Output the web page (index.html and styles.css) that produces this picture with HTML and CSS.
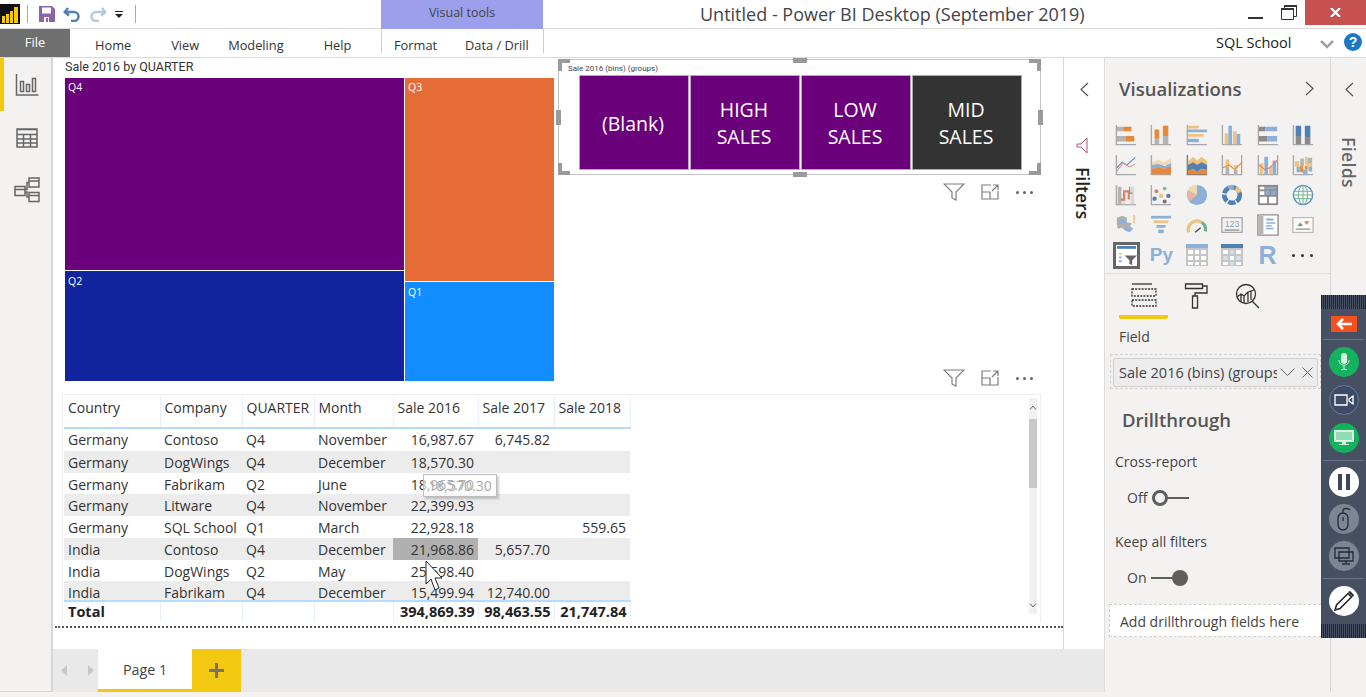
FILE: index.html
```html
<!DOCTYPE html>
<html lang="en">
<head>
    <meta charset="UTF-8">
    <title>Untitled - Power BI Desktop</title>
    <link rel="stylesheet" href="styles.css">
</head>
<body>
<div class="app">

    <!-- title bar -->
    <div class="titlebar">
        <svg class="logo" width="20" height="20" viewBox="0 0 20 20"><rect width="20" height="20" fill="#111"/><path fill="#f2c811" d="M2 12h3v7H2zM6 10h3v9H6zM10 7h3v12h-3zM14 3h4v16h-4z"/></svg>
        <span class="qat-sep"></span>
        <svg class="qat-save" width="16" height="16" viewBox="0 0 16 16"><path fill="#8a63a8" d="M0 0h13l3 3v13H0z"/><path fill="#fff" d="M3 1.500h9v6H3zM5 11h5v5H5z"/><path fill="#8a63a8" d="M7 12h2v4H7z"/></svg>
        <svg class="qat-undo" width="18" height="16" viewBox="0 0 18 16"><path fill="none" stroke="#4f81b5" stroke-width="2.500" d="M5 2L1.800 6 6 9.500M2 6h9a4.500 4.500 0 0 1 0 9H8"/></svg>
        <svg class="qat-redo" width="18" height="16" viewBox="0 0 18 16"><path fill="none" stroke="#b5c8dc" stroke-width="2.500" d="M13 2l3.200 4L12 9.500M16 6H7a4.500 4.500 0 0 0 0 9h3"/></svg>
        <svg class="qat-more" width="8" height="7" viewBox="0 0 8 7"><path fill="#222" d="M0 0h8v1H0zM0 3h8L4 7z"/></svg>
        <span class="qat-sep qat-sep-end"></span>
        <div class="visual-tools">Visual tools</div>
        <div class="app-title">Untitled - Power BI Desktop (September 2019)</div>
        <svg class="win-min" width="15" height="2"><rect width="15" height="2" fill="#333"/></svg>
        <svg class="win-max" width="16" height="15" viewBox="0 0 16 15"><path fill="none" stroke="#333" d="M.5 3.500h12v11H.5zM3.500 3V.5h12v11H13"/><path stroke="#333" stroke-width="2" d="M0 4h13M3 1h13"/></svg>
        <div class="win-close"><svg width="11" height="9" viewBox="0 0 11 9"><path stroke="#fff" stroke-width="2.200" d="M1 0l9 9M10 0L1 9"/></svg></div>
    </div>

    <!-- ribbon tabs -->
    <div class="ribbon">
        <div class="file-tab">File</div>
        <span class="tab tab-home">Home</span>
        <span class="tab tab-view">View</span>
        <span class="tab tab-modeling">Modeling</span>
        <span class="tab tab-help">Help</span>
        <div class="context-tabs">
            <span class="tab">Format</span>
            <span class="tab">Data / Drill</span>
        </div>
        <span class="account">SQL School</span>
        <svg class="account-chev" width="14" height="9" viewBox="0 0 14 9"><path fill="none" stroke="#a0a0a0" stroke-width="2.500" d="M1 1l6 6 6-6"/></svg>
        <div class="help-btn">?</div>
    </div>

    <div class="main">
        <!-- left rail -->
        <div class="rail">
            <div class="rail-item rail-active">
                <svg width="24" height="24" viewBox="0 0 24 24" class="rail-icon"><path d="M1.500 1v21h22M5.500 8.500h3v10h-3zM11.500 11.500h3v7h-3zM17.500 5.500h3v13h-3z"/></svg>
            </div>
            <div class="rail-item">
                <svg width="22" height="20" viewBox="0 0 22 20" class="rail-icon"><path d="M1 1h20v18H1zM1 1.500h20M1 6.500h20M1 11h20M1 15h20M7.500 6.500V19M14.500 6.500V19"/></svg>
            </div>
            <div class="rail-item">
                <svg width="26" height="28" viewBox="0 0 26 28" class="rail-icon"><path d="M15 1h10v9H15zM1 9.500h10v9H1zM15 15.500h10v9H15zM15 4h10M1 12.500h10M15 18.500h10M11 12.500h2V5.500h2M11 15h2v5h2"/></svg>
            </div>
        </div>

        <div class="center">
            <div class="center-top">
                <div class="canvas">
                    <div class="canvas-top">
                        <!-- treemap -->
                        <div class="treemap-visual">
                            <div class="visual-title">Sale 2016 by QUARTER</div>
                            <div class="treemap">
                                <div class="tm-col tm-col-a">
                                    <div class="tm-cell tm-q4">Q4</div>
                                    <div class="tm-cell tm-q2">Q2</div>
                                </div>
                                <div class="tm-col tm-col-b">
                                    <div class="tm-cell tm-q3">Q3</div>
                                    <div class="tm-cell tm-q1">Q1</div>
                                </div>
                            </div>
                        </div>

                        <div class="right-visuals">
                            <!-- slicer -->
                            <div class="slicer">
                                <div class="slicer-title">Sale 2016 (bins) (groups)</div>
                                <div class="tiles">
                                    <div class="tile">(Blank)</div>
                                    <div class="tile">HIGH<br>SALES</div>
                                    <div class="tile">LOW<br>SALES</div>
                                    <div class="tile tile-dark">MID<br>SALES</div>
                                </div>
                                <span class="grip corner c-tl"></span><span class="grip corner c-tr"></span>
                                <span class="grip corner c-bl"></span><span class="grip corner c-br"></span>
                                <span class="grip side s-t"></span><span class="grip side s-b"></span>
                                <span class="grip side s-l"></span><span class="grip side s-r"></span>
                            </div>
                            <div class="visual-actions">
                                <svg width="22" height="18" viewBox="0 0 22 18" class="va"><path d="M1 1h20l-8 8v8l-4-2V9z"/></svg>
                                <svg width="18" height="16" viewBox="0 0 18 16" class="va"><path d="M10 1H1v14h16V7M1 8h8v7M12 1h5v5M17 1l-6 6"/></svg>
                                <span class="dots"><i></i><i></i><i></i></span>
                            </div>
                            <div class="visual-actions actions-table">
                                <svg width="22" height="18" viewBox="0 0 22 18" class="va"><path d="M1 1h20l-8 8v8l-4-2V9z"/></svg>
                                <svg width="18" height="16" viewBox="0 0 18 16" class="va"><path d="M10 1H1v14h16V7M1 8h8v7M12 1h5v5M17 1l-6 6"/></svg>
                                <span class="dots"><i></i><i></i><i></i></span>
                            </div>
                        </div>
                    </div>

                    <!-- table visual -->
                    <div class="table-visual">
                        <div class="table-clip">
                            <table class="data">
                                <colgroup><col class="w96"><col class="w82"><col class="w72"><col class="w79"><col class="w85"><col class="w76"><col class="w76"></colgroup>
                                <thead>
                                    <tr><th>Country</th><th>Company</th><th>QUARTER</th><th>Month</th><th>Sale 2016</th><th>Sale 2017</th><th>Sale 2018</th></tr>
                                </thead>
                                <tbody>
                                    <tr class="h23"><td>Germany</td><td>Contoso</td><td>Q4</td><td>November</td><td class="num">16,987.67</td><td class="num">6,745.82</td><td></td></tr>
                                    <tr class="band"><td>Germany</td><td>DogWings</td><td>Q4</td><td>December</td><td class="num">18,570.30</td><td></td><td></td></tr>
                                    <tr class="h21"><td>Germany</td><td>Fabrikam</td><td>Q2</td><td>June</td><td class="num">18,965.70</td><td></td><td></td></tr>
                                    <tr class="band"><td>Germany</td><td>Litware</td><td>Q4</td><td>November</td><td class="num">22,399.93</td><td></td><td></td></tr>
                                    <tr><td>Germany</td><td>SQL School</td><td>Q1</td><td>March</td><td class="num">22,928.18</td><td></td><td class="num">559.65</td></tr>
                                    <tr class="band"><td>India</td><td>Contoso</td><td>Q4</td><td>December</td><td class="num hit">21,968.86</td><td class="num">5,657.70</td><td></td></tr>
                                    <tr class="h21"><td>India</td><td>DogWings</td><td>Q2</td><td>May</td><td class="num">25,598.40</td><td></td><td></td></tr>
                                    <tr class="band"><td>India</td><td>Fabrikam</td><td>Q4</td><td>December</td><td class="num">15,499.94</td><td class="num">12,740.00</td><td></td></tr>
                                </tbody>
                            </table>
                        </div>
                        <table class="data totals">
                            <colgroup><col class="w96"><col class="w82"><col class="w72"><col class="w79"><col class="w85"><col class="w76"><col class="w76"></colgroup>
                            <tr><td>Total</td><td></td><td></td><td></td><td class="num">394,869.39</td><td class="num">98,463.55</td><td class="num">21,747.84</td></tr>
                        </table>
                        <div class="scrollbar">
                            <svg width="8" height="5" viewBox="0 0 8 5" class="sb-arrow"><path d="M1 4.500L4 1l3 3.500"/></svg>
                            <div class="sb-thumb"></div>
                            <svg width="8" height="5" viewBox="0 0 8 5" class="sb-arrow sb-down"><path d="M1 .5L4 4l3-3.500"/></svg>
                        </div>
                        <div class="cell-tip">18,570.30</div>
                        <svg class="cursor" width="20" height="34" viewBox="0 0 20 34"><path fill="#fff" stroke="#222" d="M1 1v23l5-5 4 11 4-2-4-10h7z"/></svg>
                    </div>
                    <div class="page-edge"></div>
                </div>

                <!-- filters pane collapsed -->
                <div class="filters-pane">
                    <svg width="9" height="15" viewBox="0 0 9 15" class="chev"><path d="M8 1L1 7.500 8 14"/></svg>
                    <svg width="12" height="17" viewBox="0 0 12 17" class="filter-mark"><path d="M11 1v15L5 10H1V7h4z"/></svg>
                    <div class="vtext vtext-filters">Filters</div>
                </div>
            </div>

            <!-- page tabs -->
            <div class="pagebar">
                <div class="page-nav">
                    <svg width="7" height="11" viewBox="0 0 7 11"><path fill="#c8c8c8" d="M6 0v11L0 5.500z"/></svg>
                    <svg width="7" height="11" viewBox="0 0 7 11"><path fill="#c8c8c8" d="M0 0v11l6-5.500z"/></svg>
                </div>
                <div class="page-tab">Page 1</div>
                <div class="page-add"><svg width="15" height="15" viewBox="0 0 15 15"><path fill="#77736a" d="M6 0h3v6h6v3H9v6H6V9H0V6h6z"/></svg></div>
            </div>
        </div>

        <!-- visualizations pane -->
        <div class="viz-pane">
            <div class="viz-head">
                <span>Visualizations</span>
                <svg width="9" height="15" viewBox="0 0 9 15" class="chev"><path d="M1 1l7 6.500L1 14"/></svg>
            </div>
            <div class="viz-grid">
                <svg viewBox="0 0 24 24"><path class="ax" d="M1.500 1v21.500H23"/><path class="g" d="M2 3h7v5H2zM2 13h10v6H2z"/><path class="o" d="M9 3h9v5H9zM12 13h9v6h-9z"/></svg>
                <svg viewBox="0 0 24 24"><path class="ax" d="M1.500 1v21.500H23"/><path class="g" d="M5 16h5v6H5zM14 13h6v9h-6z"/><path class="o" d="M5 6h5v10H5zM14 2h6v11h-6z"/></svg>
                <svg viewBox="0 0 24 24"><path class="ax" d="M1.500 1v21.500H23"/><path class="t" d="M2 2h12v3H2zM2 11h17v3H2z"/><path class="b" d="M2 6h21v3H2zM2 16h12v4H2z"/></svg>
                <svg viewBox="0 0 24 24"><path class="ax" d="M1.500 1v21.500H23"/><path class="t" d="M4 10h4v12H4zM13 8h4v14h-4z"/><path class="b" d="M8 2h4v20H8zM17 11h4v11h-4z"/></svg>
                <svg viewBox="0 0 24 24"><path class="ax" d="M1.500 1v21.500H23"/><path class="k" d="M2 3h7v5H2zM2 13h9v6H2z"/><path class="b" d="M9 3h13v5H9zM11 13h11v6H11z"/></svg>
                <svg viewBox="0 0 24 24"><path class="ax" d="M1.500 1v21.500H23"/><path class="k" d="M4 13h6v9H4zM14 15h6v7h-6z"/><path class="d" d="M4 2h6v11H4zM14 2h6v13h-6z"/></svg>

                <svg viewBox="0 0 24 24"><path class="ax" d="M1.500 1v21.500H23"/><path class="ln" stroke="#5b8fc7" d="M2 15l6-6 5 3 9-8"/><path class="ln" stroke="#e8a090" d="M2 19l7-9 7 4 6-3"/></svg>
                <svg viewBox="0 0 24 24"><path class="ax" d="M1.500 1v21.500H23"/><path class="t" opacity=".5" d="M2 9l7-3 6 3 8-5v8H2z"/><path class="b" d="M2 12l7-1 7 2 7-3v6H2z"/><path class="o" d="M2 16l8-1 6 1 7-2v8H2z"/></svg>
                <svg viewBox="0 0 24 24"><path class="ax2" d="M1.500 1v21.500H23"/><path class="t" d="M2 8l6-5 4 4 5-4 6 5v8H2z"/><path class="d" d="M2 12l6-3 4 3 5-3 6 3v6l-6-2-5 4-4-4-6 4z"/><path class="o" d="M2 22v-4l6-2 4 4 5-4 6 2v4z"/></svg>
                <svg viewBox="0 0 24 24"><path class="ax" d="M1.500 1v21.500H23"/><path class="ln" stroke="#e8893a" d="M22.500 1v21"/><path class="g" d="M5 14h4v8H5z"/><path class="t" d="M5 6h4v8H5z"/><path class="g" d="M14 17h4v5h-4z"/><path class="t" d="M14 12h4v5h-4z"/><path class="ln" stroke="#e8893a" d="M2 15l7-3 6 5 7-7"/></svg>
                <svg viewBox="0 0 24 24"><path class="ax" d="M1.500 1v21.500H23"/><path class="ln" stroke="#e8893a" d="M22.500 1v21"/><path class="t" d="M3 10h4v12H3zM13 14h4v8h-4z"/><path class="b" d="M8 3h4v19H8zM17 7h4v15h-4z"/><path class="ln" stroke="#e08070" d="M2 12l7 5 5-2 8-8"/></svg>
                <svg viewBox="0 0 24 24"><path class="ax" d="M1.500 1v21.500H23"/><path class="g" d="M9 5h4v8H9zM17 4h5v6h-5z"/><path class="t" d="M3 8h5v6H3zM14 3h3v9h-3zM17 10h5v4h-5z"/><path class="b" d="M5 14h4v6H5zM12 17h5v5h-5zM18 14h4v5h-4z"/><path class="o" d="M9 13h3v7H9zM14 13h3v4h-3z"/></svg>

                <svg viewBox="0 0 24 24"><path class="ax" d="M1.500 1v21.500H23"/><path class="g" d="M3 3h4v19H3z"/><path fill="#d9d9d9" d="M8 11h3v11H8zM17 3h4v19h-4z"/><path fill="none" stroke="#d9826a" stroke-width="2.500" d="M6 17h4V8h5v9"/><path class="ln" stroke="#5fa37e" d="M16 3v7h3"/></svg>
                <svg viewBox="0 0 24 24"><path class="ax" d="M1.500 1v21.500H23"/><circle cx="7" cy="8" r="2.200" fill="#d9826a"/><circle cx="16" cy="5" r="2" fill="#86b59a"/><circle cx="12" cy="13" r="2.400" fill="#efc27f"/><circle cx="5" cy="16" r="2.400" fill="#4f81b5"/><circle cx="20" cy="13" r="2.400" fill="#4f81b5"/><circle cx="16" cy="19" r="2.200" fill="#777"/></svg>
                <svg viewBox="0 0 24 24"><circle cx="12" cy="12" r="11" fill="#8db0d8"/><path fill="#efd9b4" d="M12 12V1A11 11 0 0 0 2 7z"/><path fill="#e9b3a6" d="M12 12L2 7a11 11 0 0 0 2 12z"/></svg>
                <svg viewBox="0 0 24 24"><circle cx="12" cy="12" r="8.500" fill="none" stroke="#4f81b5" stroke-width="5" stroke-dasharray="8 1.500"/><path fill="none" stroke="#efc27f" stroke-width="5" d="M16 4.500a8.500 8.500 0 0 1 4 5"/><path fill="none" stroke="#8db0d8" stroke-width="5" d="M8 4.500a8.500 8.500 0 0 1 6-1"/></svg>
                <svg viewBox="0 0 24 24"><path class="k" d="M1 1h22v22H1z"/><path fill="#fff" d="M3 3h5v3H3zM3 8h5v4H3zM3 14h8v7H3zM13 14h8v7h-8z"/><path class="b" opacity=".8" d="M9 3h12v3H9zM9 7h5v5H9zM15 7h6v5h-6z"/></svg>
                <svg viewBox="0 0 24 24"><circle cx="12" cy="12" r="10.500" fill="#f3f7f5" stroke="#5b8fc7" stroke-width="1.500"/><ellipse cx="12" cy="12" rx="5" ry="10.500" fill="none" stroke="#6fae8f"/><path fill="none" stroke="#6fae8f" d="M2 8h20M2 16h20M1.500 12h21M12 1.500v21"/></svg>

                <svg viewBox="0 0 24 24"><path fill="#b0b0b0" d="M2 4l6-2 5 2v5l5 1-2 5-4 3-5-3-4 1-1-5z"/><path fill="#8db0d8" d="M4 6h7v4H4zM8 15l4 1 5-2 3 2-4 4-5-2z"/><path fill="#efc27f" d="M20 1h2v6h-2zM20 8h2v2h-2z"/></svg>
                <svg viewBox="0 0 24 24"><path class="b" d="M1 2h22v3H1z"/><path class="t" d="M4 7h16v3H4z"/><path class="b" d="M7 12h10v3H7z"/><path class="b" d="M9 17h6v4H9z"/></svg>
                <svg viewBox="0 0 24 24"><path fill="none" stroke="#efc27f" stroke-width="3.500" d="M3 20a9.500 9.500 0 0 1 14-11"/><path fill="none" stroke="#6fae8f" stroke-width="3.500" d="M17 9a9.500 9.500 0 0 1 4 10"/><path stroke="#444" stroke-width="1.500" d="M10 20l6-5"/></svg>
                <svg viewBox="0 0 24 24"><path class="ax" d="M1 4h22v16H1z"/><text x="12" y="14.500" text-anchor="middle" font-family="Liberation Sans" font-size="9.500" fill="#7fa5cf">123</text><path stroke="#666" d="M4 17.500h16"/></svg>
                <svg viewBox="0 0 24 24"><path fill="#fff" stroke="#8d8d8d" stroke-width="1.500" d="M1 1h22v22H1z"/><path class="g" d="M2 2h5v20H2z"/><path class="b" d="M10 5h8v2h-8zM10 9h10v1.500H10zM10 12h6v1.500h-6zM10 15h8v1.500h-8z"/></svg>
                <svg viewBox="0 0 24 24"><path fill="#fff" stroke="#bbb" stroke-width="1.500" d="M1 4h22v16H1z"/><path fill="#5fa37e" d="M6 13l3-4 3 4z"/><path fill="#d9826a" d="M13 8h6l-3 4z"/><path stroke="#666" d="M4 16.500h16"/></svg>

                <div class="slicer-icon-box">
                    <svg viewBox="0 0 22 22"><path fill="#fff" d="M0 0h22v22H0z"/><path fill="#4f81b5" d="M1 1h20v3H1z"/><path fill="#efc27f" d="M3 8h3v2H3z"/><path fill="#8db0d8" d="M3 12h3v2H3zM3 16h3v2H3z"/><path fill="#666" d="M9 11h13l-5 5v5l-3-1v-4z"/></svg>
                </div>
                <span class="viz-py">Py</span>
                <svg viewBox="0 0 22 22"><path fill="#c5c5c5" d="M0 0h22v22H0z"/><path fill="#8db0d8" d="M0 0h22v4H0z"/><path fill="#fff" d="M2 6h5v4H2zM9 6h4v4H9zM15 6h5v4h-5zM2 12h5v4H2zM9 12h4v4H9zM15 12h5v4h-5zM2 18h5v3H2zM9 18h4v3H9zM15 18h5v3h-5z"/></svg>
                <svg viewBox="0 0 22 22"><path fill="#c5c5c5" d="M0 0h22v22H0z"/><path fill="#4f81b5" d="M0 0h22v4H0z"/><path fill="#fff" d="M2 6h5v4H2zM15 6h5v4h-5zM9 12h4v4H9zM2 18h5v3H2zM15 18h5v3h-5z"/><path fill="#cfe0f1" d="M9 6h4v4H9zM2 12h5v4H2zM15 12h5v4h-5zM9 18h4v3H9z"/></svg>
                <span class="viz-r">R</span>
                <span class="viz-more"><i></i><i></i><i></i></span>
            </div>
            <div class="viz-tabs">
                <div class="viz-tab viz-tab-on">
                    <svg width="26" height="24" viewBox="0 0 26 24" class="tab-icon"><path d="M1 1h20"/><path stroke-dasharray="2 1.200" d="M1 6h24v7H1zM1 17h24v6H1z"/></svg>
                </div>
                <div class="viz-tab">
                    <svg width="24" height="26" viewBox="0 0 24 26" class="tab-icon"><path d="M1.500 1h17v4.500h-17zM18.500 3H23v7H11v3M8.500 13h5v12h-5z"/></svg>
                </div>
                <div class="viz-tab">
                    <svg width="26" height="26" viewBox="0 0 26 26" class="tab-icon"><circle cx="11" cy="11" r="9.500"/><path d="M17 18l7 7M2 14l4-3 3 2 4-4 6-2M6 11v8M9 13v7M13 9v10M16 8v9"/></svg>
                </div>
            </div>
            <div class="field-label">Field</div>
            <div class="field-well">
                <div class="field-pill">
                    <span class="pill-text">Sale 2016 (bins) (groups)</span>
                    <svg width="15" height="9" viewBox="0 0 15 9" class="thin"><path d="M.5.5l7 7 7-7"/></svg>
                    <svg width="11" height="11" viewBox="0 0 11 11" class="thin"><path d="M.5.5l10 10M10.500.5l-10 10"/></svg>
                </div>
            </div>
            <div class="drill-title">Drillthrough</div>
            <div class="opt-label">Cross-report</div>
            <div class="toggle-row"><span>Off</span><span class="toggle toggle-off"><b></b></span></div>
            <div class="opt-label opt-keep">Keep all filters</div>
            <div class="toggle-row"><span>On</span><span class="toggle toggle-on"><b></b></span></div>
            <div class="drill-well">Add drillthrough fields here</div>
        </div>

        <!-- fields pane collapsed -->
        <div class="fields-pane">
            <svg width="9" height="15" viewBox="0 0 9 15" class="chev"><path d="M8 1L1 7.500 8 14"/></svg>
            <div class="vtext vtext-fields">Fields</div>
        </div>
    </div>

    <!-- screen recorder toolbar, floats over the app -->
    <div class="recorder">
        <div class="hatch"></div>
        <div class="rec-back"><svg width="16" height="12" viewBox="0 0 16 12"><path fill="none" stroke="#fff" stroke-width="2.500" d="M7 1L2 6l5 5M2 6h14"/></svg></div>
        <div class="rec-line"></div>
        <div class="rec-group rec-group-first">
            <div class="rec-btn rec-green"><svg width="12" height="18" viewBox="0 0 12 18"><rect x="3" width="6" height="11" rx="3" fill="#d9f2e3"/><path fill="none" stroke="#d9f2e3" d="M1 7c0 7 10 7 10 0M6 13v3M3 16.500h6"/></svg></div>
            <div class="rec-btn rec-blue"><svg width="20" height="12" viewBox="0 0 20 12"><path fill="none" stroke="#fff" stroke-width="1.300" d="M1 1h12v10H1zM19 2l-4 3v2l4 3z"/></svg></div>
            <div class="rec-btn rec-green"><svg width="20" height="16" viewBox="0 0 20 16"><path fill="#d9f2e3" d="M0 0h20v12H0zM8 12h4v2h3v1H5v-1h3z"/><path fill="#12b35c" d="M2 2h16v8H2z" opacity=".35"/></svg></div>
        </div>
        <div class="rec-line"></div>
        <div class="rec-group">
            <div class="rec-btn rec-white"><svg width="12" height="16" viewBox="0 0 12 16"><path fill="#3c4559" d="M0 0h4v16H0zM8 0h4v16H8z"/></svg></div>
            <div class="rec-btn rec-gray"><svg width="14" height="24" viewBox="0 0 14 24"><path fill="none" stroke="#222b3a" stroke-width="1.300" d="M1 11a5 5 0 0 1 10 0v7a5 5 0 0 1-10 0zM6 6V3c0-2 6-2 7 0M6 10v4"/></svg></div>
            <div class="rec-btn rec-gray"><svg width="20" height="18" viewBox="0 0 20 18"><path fill="none" stroke="#222b3a" stroke-width="1.300" d="M1 1h14v10H1zM5 5h14v9H5zM12 14v2M8 17h8"/></svg></div>
        </div>
        <div class="rec-line"></div>
        <div class="rec-btn rec-white rec-pen"><svg width="20" height="20" viewBox="0 0 20 20"><path fill="none" stroke="#222" stroke-width="1.500" d="M1 19l1.500-5L14 2.500l3.500 3.500L6 17.500z"/><path fill="#222" d="M14 1l2-1 4 4-1 2z"/></svg></div>
        <div class="hatch hatch-end"></div>
    </div>
</div>
</body>
</html>
```

FILE: styles.css
```css
* {
    box-sizing: border-box;
}

body {
    margin: 0;
    background: #f3f2f1;
    font-family: "Open Sans", sans-serif;
    color: #333;
}

.app {
    position: relative;
    width: 1366px;
    height: 697px;
    overflow: hidden;
    display: flex;
    flex-direction: column;
}

/* title bar */
.titlebar {
    height: 29px;
    flex: none;
    background: #fff;
    border-bottom: 1px solid #d9d9d9;
    display: flex;
    align-items: center;
    position: relative;
}

.qat-sep {
    width: 1px;
    height: 18px;
    background: #aaa;
    margin: 0 11px 0 7px;
}

.qat-undo {
    margin-left: 8px;
}

.qat-redo {
    margin-left: 8px;
}

.qat-more {
    margin-left: 8px;
}

.qat-sep-end {
    margin-left: 12px;
}

.visual-tools {
    position: absolute;
    left: 381px;
    top: 0;
    width: 162px;
    height: 29px;
    background: #9b9fec;
    color: #444;
    font-size: 12.500px;
    text-align: center;
    line-height: 26px;
}

.app-title {
    position: absolute;
    left: 700px;
    top: 2px;
    font-size: 18px;
    color: #444;
    white-space: nowrap;
}

.win-min {
    position: absolute;
    left: 1248px;
    top: 17px;
}

.win-max {
    position: absolute;
    left: 1281px;
    top: 5px;
}

.win-close {
    position: absolute;
    left: 1305px;
    top: 0;
    width: 61px;
    height: 25px;
    background: #c75050;
    display: flex;
    align-items: center;
    justify-content: center;
}

/* ribbon */
.ribbon {
    height: 29px;
    flex: none;
    background: #fff;
    border-bottom: 1px solid #d9d9d9;
    display: flex;
    align-items: center;
    font-size: 12.800px;
    position: relative;
}

.file-tab {
    width: 70px;
    height: 28px;
    background: #6f6f6f;
    color: #fff;
    text-align: center;
    line-height: 26px;
}

.tab {
    padding-top: 4px;
    white-space: nowrap;
    color: #333;
}

.tab-home { margin-left: 25px; }
.tab-view { margin-left: 40px; }
.tab-modeling { margin-left: 29px; }
.tab-help { margin-left: 40px; }

.context-tabs {
    position: absolute;
    left: 381px;
    top: 0;
    width: 163px;
    height: 24px;
    border-left: 1px solid #ccc;
    border-right: 1px solid #ccc;
    display: flex;
    gap: 28px;
    padding-left: 12px;
    align-items: flex-start;
    padding-top: 3px;
}

.context-tabs .tab {
    padding-top: 4px;
}

.account {
    position: absolute;
    left: 1216px;
    top: 4px;
    font-size: 14.500px;
    color: #222;
}

.account-chev {
    position: absolute;
    left: 1320px;
    top: 11px;
}

.help-btn {
    position: absolute;
    left: 1344px;
    top: 4px;
    width: 18px;
    height: 18px;
    border-radius: 50%;
    background: #1a7ac8;
    color: #fff;
    font: bold 14px/18px "Liberation Sans", sans-serif;
    text-align: center;
}

/* main area */
.main {
    flex: 1;
    display: flex;
    min-height: 0;
}

.rail {
    width: 53px;
    flex: none;
    height: 634px;
    background: #f3f2f1;
    border-right: 2px solid #d6d6d6;
    border-bottom: 1px solid #d6d6d6;
}

.rail-item {
    height: 53px;
    display: flex;
    align-items: center;
    justify-content: center;
    border-left: 4px solid transparent;
    padding-right: 1px;
}

.rail-active {
    border-left-color: #f2c811;
}

.rail-icon {
    fill: none;
    stroke: #666;
    stroke-width: 1.500;
}

.center {
    width: 1051px;
    flex: none;
    display: flex;
    flex-direction: column;
}

.center-top {
    height: 591px;
    display: flex;
}

.canvas {
    width: 1010px;
    background: #fff;
    padding: 1px 0 0 2px;
    display: flex;
    flex-direction: column;
}

.canvas-top {
    display: flex;
    height: 335px;
    flex: none;
}

.treemap-visual {
    width: 489px;
    margin-left: 10px;
}

.visual-title {
    height: 19px;
    font-family: Roboto, sans-serif;
    font-size: 12.500px;
    line-height: 16px;
    color: #333;
}

.treemap {
    height: 303px;
    display: flex;
    gap: 1px;
    width: 489px;
}

.tm-col {
    display: flex;
    flex-direction: column;
    gap: 1px;
}

.tm-col-a { width: 339px; }
.tm-col-b { width: 149px; }

.tm-cell {
    color: #fff;
    font-size: 10.500px;
    padding: 2px 3px;
}

.tm-q4 { height: 192px; background: #6a007a; }
.tm-q2 { height: 110px; padding-top: 3px; background: #12239e; }
.tm-q3 { height: 203px; background: #e66c37; }
.tm-q1 { height: 99px; padding-top: 3px; background: #118dff; }

.right-visuals {
    width: 483px;
    margin-left: 4px;
    display: flex;
    flex-direction: column;
}

.slicer {
    position: relative;
    height: 116px;
    border: 1px solid #c4c4c4;
    padding: 3px 18px 0 9px;
}

.slicer-title {
    font-family: Roboto, sans-serif;
    font-size: 8px;
    line-height: 11px;
    color: #444;
}

.tiles {
    display: flex;
    height: 95px;
    margin: 1px 0 0 11px;
    gap: 1px;
}

.tile {
    width: 110px;
    background: #6a007a;
    color: #fff;
    font-size: 19.500px;
    line-height: 27px;
    display: flex;
    align-items: center;
    justify-content: center;
    text-align: center;
    border: 1px solid #b9a5bd;
    padding: 1px 2px 0 0;
}

.tile-dark {
    background: #333;
    border-color: #aaa;
}

.grip {
    position: absolute;
    background: #9a9a9a;
}

.side.s-t, .side.s-b {
    width: 14px;
    height: 5px;
    left: 234px;
}

.s-t { top: -2px; }
.s-b { bottom: -3px; }

.side.s-l, .side.s-r {
    width: 5px;
    height: 15px;
    top: 50px;
}

.s-l { left: -3px; }
.s-r { right: -3px; }

.corner {
    width: 12px;
    height: 12px;
    background: none;
}

.c-tl { left: -1px; top: -1px; border-left: 4px solid #9a9a9a; border-top: 4px solid #9a9a9a; }
.c-tr { right: -1px; top: -1px; border-right: 4px solid #9a9a9a; border-top: 4px solid #9a9a9a; }
.c-bl { left: -1px; bottom: -1px; border-left: 4px solid #9a9a9a; border-bottom: 4px solid #9a9a9a; }
.c-br { right: -1px; bottom: -1px; border-right: 4px solid #9a9a9a; border-bottom: 4px solid #9a9a9a; }

.visual-actions {
    display: flex;
    align-items: center;
    height: 18px;
    margin-top: 8px;
    padding-left: 385px;
}

.actions-table {
    margin-top: auto;
    margin-bottom: 7px;
}

.va {
    fill: none;
    stroke: #7d7d7d;
    stroke-width: 1.200;
    margin-right: 16px;
}

.dots {
    display: flex;
    gap: 4px;
    margin-left: 1px;
}

.dots i {
    width: 3px;
    height: 3px;
    border-radius: 50%;
    background: #666;
}

/* table */
.table-visual {
    position: relative;
    margin: 0 0 0 7px;
    width: 979px;
    height: 228px;
    flex: none;
    border: 1px solid #eee;
    border-bottom: 0;
    padding: 1px 0 0 1px;
}

.table-clip {
    height: 204px;
    overflow: hidden;
}

.data {
    border-collapse: collapse;
    table-layout: fixed;
    width: 566px;
    font-size: 14px;
    color: #333;
}

.w96 { width: 96px; }
.w82 { width: 82px; }
.w72 { width: 72px; }
.w79 { width: 79px; }
.w85 { width: 85px; }
.w76 { width: 76px; }

.data th {
    height: 32px;
    font-weight: 400;
    text-align: left;
    padding: 0 0 8px 4px;
    border-bottom: 2px solid #b5dcff;
    border-right: 1px solid #e3f0fb;
    white-space: nowrap;
}

.data td {
    height: 22px;
    padding: 1px 4px 0;
    white-space: nowrap;
    overflow: hidden;
}

.data tr.h23 td { height: 23px; padding-top: 0; padding-bottom: 1px; }
.data tr.h21 td { height: 21px; }

.band td {
    background: #ececec;
}

.data .num {
    text-align: right;
}

.data .hit {
    background: #b0b0b0;
}

.totals {
    border-top: 2px solid #b5dcff;
    font-size: 14.500px;
    font-weight: 700;
    color: #222;
}

.data.totals td {
    height: 20px;
    padding: 0 3px 0 4px;
    border-right: 1px solid #e3f0fb;
}

.scrollbar {
    position: absolute;
    left: 966px;
    top: 3px;
    width: 8px;
    height: 216px;
    background: #f1f1f1;
    display: flex;
    flex-direction: column;
    padding-top: 7px;
}

.sb-arrow {
    fill: none;
    stroke: #666;
    flex: none;
}

.sb-thumb {
    height: 69px;
    background: #c8c8c8;
    margin-top: 9px;
}

.sb-down {
    margin-top: auto;
    margin-bottom: 6px;
}

.cell-tip {
    position: absolute;
    left: 360px;
    top: 79px;
    width: 74px;
    height: 23px;
    background: rgba(255, 255, 255, 0.6);
    border: 1px solid #bdbdbd;
    box-shadow: 2px 2px 2px rgba(0, 0, 0, 0.2);
    color: #aaa;
    font-size: 14px;
    text-align: center;
    line-height: 21px;
}

.cursor {
    position: absolute;
    left: 362px;
    top: 165px;
}

.page-edge {
    height: 2px;
    margin: 4px 0 0 0;
    flex: none;
    border-top: 2px dotted #555;
}

/* collapsed panes */
.filters-pane {
    width: 41px;
    background: #fff;
    border-left: 1px solid #d6d6d6;
    padding: 24px 0 0 16px;
    display: flex;
    flex-direction: column;
}

.chev {
    fill: none;
    stroke: #555;
    stroke-width: 1.200;
    flex: none;
}

.filter-mark {
    fill: none;
    stroke: #a35a7a;
    margin: 40px 0 0 -4px;
    flex: none;
}

.vtext {
    writing-mode: vertical-rl;
    align-self: flex-start;
    font-size: 17.500px;
    font-weight: 600;
}

.vtext-filters {
    margin: 13px 0 0 -9px;
    color: #222;
}

.vtext-fields {
    margin: 40px 0 0 -8px;
    color: #666;
    letter-spacing: 0.4px;
}

.fields-pane {
    width: 36px;
    flex: none;
    height: 634px;
    background: #f3f2f1;
    border-left: 1px solid #d6d6d6;
    padding: 24px 0 0 14px;
    display: flex;
    flex-direction: column;
}

/* page tabs */
.pagebar {
    height: 43px;
    flex: none;
    background: #e9e9e9;
    display: flex;
}

.page-nav {
    width: 45px;
    display: flex;
    align-items: center;
    justify-content: space-between;
    padding: 0 3px 0 8px;
}

.page-tab {
    width: 94px;
    background: #fff;
    border-bottom: 3px solid #f2c811;
    text-align: center;
    font-size: 14.300px;
    line-height: 42px;
    color: #444;
}

.page-add {
    width: 49px;
    background: #f2c811;
    display: flex;
    align-items: center;
    justify-content: center;
}

/* visualizations pane */
.viz-pane {
    width: 226px;
    flex: none;
    height: 634px;
    background: #f3f2f1;
    border-left: 1px solid #dcdcdc;
    padding-top: 17px;
}

.viz-head {
    display: flex;
    align-items: center;
    justify-content: space-between;
    padding: 0 16px 0 14px;
    font-size: 18.500px;
    font-weight: 600;
    color: #555;
    height: 26px;
}

.viz-grid {
    display: grid;
    grid-template-columns: repeat(6, 22px);
    grid-auto-rows: 22px;
    gap: 8px 13.400px;
    margin: 23px 0 0 10px;
    justify-items: center;
    align-items: center;
}

.viz-grid > svg {
    width: 22px;
    height: 22px;
}

.ax {
    fill: none;
    stroke: #a9a9a9;
    stroke-width: 1.500;
}

.ax2 {
    fill: none;
    stroke: #777;
    stroke-width: 1.500;
}

.ln {
    fill: none;
    stroke-width: 1.200;
}

.o { fill: #e8893a; }
.b { fill: #8db0d8; }
.g { fill: #b4b4b4; }
.t { fill: #efc27f; }
.k { fill: #8a8a8a; }
.d { fill: #4f81b5; }

.slicer-icon-box {
    width: 27px;
    height: 27px;
    border: 3px solid #666;
    background: #fff;
}

.slicer-icon-box svg {
    display: block;
    width: 21px;
    height: 21px;
}

.viz-py, .viz-r {
    font-family: "Liberation Sans", sans-serif;
    font-weight: 700;
    color: #8db0d8;
    white-space: nowrap;
}

.viz-py {
    font-size: 19px;
}

.viz-r {
    font-size: 25px;
}

.viz-more {
    display: flex;
    gap: 6px;
}

.viz-more i {
    width: 3px;
    height: 3px;
    border-radius: 50%;
    background: #333;
}

.viz-tabs {
    display: flex;
    margin-top: 7px;
    padding: 9px 0 0 14px;
    border-top: 1px solid #dedede;
    height: 54px;
    gap: 3px;
}

.viz-tab {
    width: 49px;
    height: 36px;
    display: flex;
    justify-content: center;
}

.viz-tab-on {
    border-bottom: 4px solid #f2c811;
    border-radius: 2px;
}

.tab-icon {
    fill: none;
    stroke: #333;
    stroke-width: 1.300;
}

.field-label {
    font-size: 14px;
    line-height: 19px;
    margin: 0 0 0 14px;
    color: #444;
}

.field-well {
    margin: 8px 0 0 5px;
    width: 211px;
    height: 35px;
    border: 1px dashed #cfcfcf;
    padding: 3px 2px;
}

.field-pill {
    height: 29px;
    background: #ececec;
    border: 1px solid #cfcfcf;
    border-radius: 2px;
    display: flex;
    align-items: center;
    font-size: 14.500px;
    padding-left: 5px;
    color: #444;
}

.pill-text {
    width: 158px;
    overflow: hidden;
    white-space: nowrap;
    margin-right: 3px;
    flex: none;
}

.thin {
    fill: none;
    stroke: #666;
    margin-right: 7px;
    flex: none;
}

.drill-title {
    font-size: 18.500px;
    line-height: 25px;
    font-weight: 600;
    color: #555;
    margin: 18px 0 0 17px;
}

.opt-label {
    font-size: 14px;
    line-height: 19px;
    margin: 20px 0 0 10px;
    color: #444;
}

.opt-keep {
    margin-top: 25px;
}

.toggle-row {
    display: flex;
    align-items: center;
    font-size: 14px;
    line-height: 19px;
    margin: 17px 0 0 22px;
    gap: 5px;
    color: #444;
}

.toggle {
    position: relative;
    width: 37px;
    height: 16px;
    display: block;
}

.toggle::before {
    content: "";
    position: absolute;
    left: 0;
    right: 0;
    top: 7px;
    height: 2px;
    background: #605e5c;
}

.toggle b {
    position: absolute;
    top: 0;
    width: 16px;
    height: 16px;
    border-radius: 50%;
    background: #605e5c;
}

.toggle-off b {
    left: 0;
    background: #f3f2f1;
    border: 3px solid #605e5c;
}

.toggle-on b {
    right: 0;
}

.drill-well {
    margin: 17px 0 0 4px;
    width: 222px;
    height: 33px;
    background: #fff;
    border: 1px dashed #cfcfcf;
    font-size: 14px;
    line-height: 33px;
    padding-left: 10px;
    color: #444;
    white-space: nowrap;
}

/* recorder */
.recorder {
    position: absolute;
    left: 1321px;
    top: 295px;
    width: 45px;
    height: 343px;
    background: #475063;
    display: flex;
    flex-direction: column;
    align-items: center;
}

.hatch {
    width: 100%;
    height: 14px;
    flex: none;
    background: repeating-linear-gradient(90deg, #1f2633 0 1px, #475063 1px 2px);
}

.hatch-end {
    margin-top: auto;
}

.rec-back {
    width: 26px;
    height: 16px;
    background: #f4511e;
    margin-top: 7px;
    display: flex;
    align-items: center;
    justify-content: center;
}

.rec-line {
    width: 41px;
    height: 1px;
    background: #6b7488;
    margin-top: 7px;
    flex: none;
}

.rec-group {
    display: flex;
    flex-direction: column;
    gap: 7px;
    margin-top: 6px;
}

.rec-group-first {
    gap: 8px;
    margin-top: 7px;
}

.rec-btn {
    width: 30px;
    height: 30px;
    border-radius: 50%;
    display: flex;
    align-items: center;
    justify-content: center;
    flex: none;
}

.rec-green { background: #12b35c; }
.rec-blue { background: #3c4a68; border: 1px solid #6b7a9c; }
.rec-white { background: #fff; }
.rec-gray { background: #7d8594; }

.rec-pen {
    margin-top: 7px;
}
```
